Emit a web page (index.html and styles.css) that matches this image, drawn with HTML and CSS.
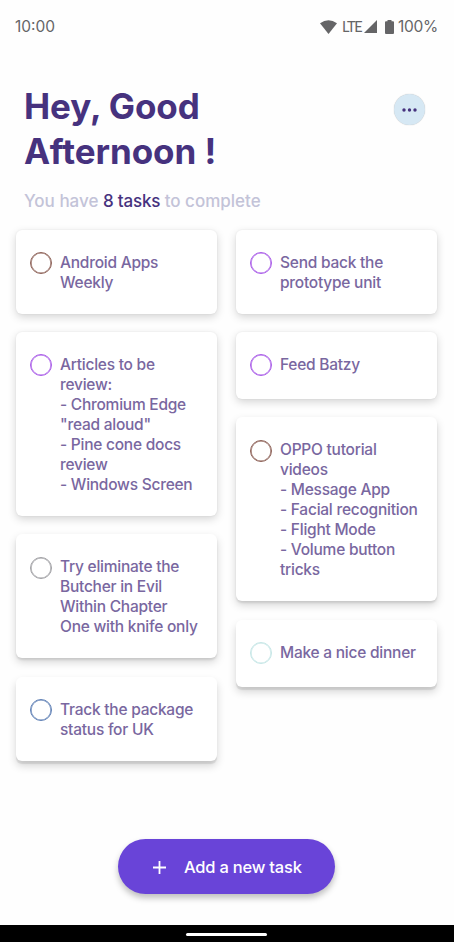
FILE: index.html
```
<!DOCTYPE html>
<html lang="en">
<head>
    <meta charset="utf-8">
    <title>Tasks</title>
    <link rel="stylesheet" href="styles.css">
</head>
<body>
    <div id="status-bar">
        <span class="time">10:00</span>
        <div class="status-icons">
            <svg class="wifi" width="17" height="14" viewBox="0 0 17 14"><path d="M0 3.3Q8.5-2.8 17 3.3L8.5 14z"/></svg>
            <span class="lte">LTE</span>
            <svg class="signal" width="13" height="13" viewBox="0 0 13 13"><path d="M13 0v13H0z"/></svg>
            <svg class="battery" width="9" height="14" viewBox="0 0 9 14"><path d="M2.5 0h4v1.2H8q1 0 1 1V13q0 1-1 1H1q-1 0-1-1V2.2q0-1 1-1h1.5z"/></svg>
            <span class="percent">100%</span>
        </div>
    </div>

    <header>
        <div>
            <h1>Hey, Good<br>Afternoon !</h1>
            <p class="summary">You have <b>8 tasks</b> to complete</p>
        </div>
        <button class="more" aria-label="More">
            <svg width="15" height="4" viewBox="0 0 15 4"><circle cx="2" cy="2" r="1.7"/><circle cx="7.5" cy="2" r="1.7"/><circle cx="13" cy="2" r="1.7"/></svg>
        </button>
    </header>

    <main>
        <div class="column">
            <div class="card">
                <span class="check brown"></span>
                <div class="text">Android Apps<br>Weekly</div>
            </div>
            <div class="card">
                <span class="check purple"></span>
                <div class="text">Articles to be<br>review:<br>- Chromium Edge<br>"read aloud"<br>- Pine cone docs<br>review<br>- Windows Screen</div>
            </div>
            <div class="card low">
                <span class="check grey"></span>
                <div class="text">Try eliminate the<br>Butcher in Evil<br>Within Chapter<br>One with knife only</div>
            </div>
            <div class="card lowest">
                <span class="check blue"></span>
                <div class="text">Track the package<br>status for UK</div>
            </div>
        </div>
        <div class="column">
            <div class="card">
                <span class="check purple"></span>
                <div class="text">Send back the<br>prototype unit</div>
            </div>
            <div class="card">
                <span class="check purple"></span>
                <div class="text">Feed Batzy</div>
            </div>
            <div class="card low">
                <span class="check brown"></span>
                <div class="text">OPPO tutorial<br>videos<br>- Message App<br>- Facial recognition<br>- Flight Mode<br>- Volume button<br>tricks</div>
            </div>
            <div class="card lowest">
                <span class="check mint"></span>
                <div class="text">Make a nice dinner</div>
            </div>
        </div>
    </main>

    <footer>
        <button class="add">
            <svg width="13" height="13" viewBox="0 0 13 13"><path d="M6.5 0v13M0 6.5h13"/></svg>
            <span>Add a new task</span>
        </button>
        <div id="nav-bar"><div class="handle"></div></div>
    </footer>
</body>
</html>
```

FILE: styles.css
```
* {
    box-sizing: border-box;
}

body {
    margin: 0;
    height: 942px;
    display: flex;
    flex-direction: column;
    background: #fefefe;
    font-family: Inter, "Liberation Sans", sans-serif;
    overflow: hidden;
}

button {
    border: none;
    padding: 0;
    font-family: inherit;
    cursor: pointer;
}

#status-bar {
    display: flex;
    justify-content: space-between;
    height: 54px;
    padding: 0 16px 0 15px;
    align-items: center;
    color: #656567;
    font-size: 15.5px;
    line-height: 20px;
}

.status-icons {
    display: flex;
    align-items: center;
}

.status-icons svg {
    fill: #656567;
    margin-top: -1px;
}

.lte {
    width: 19px;
    margin-left: 5px;
    font-family: Lato, sans-serif;
    font-size: 14.5px;
    letter-spacing: -1.2px;
}

.status-icons .signal {
    margin-left: 3px;
}

.status-icons .battery {
    margin: -1px 4px 0 8px;
}

.percent {
    letter-spacing: -0.3px;
}

header {
    display: flex;
    justify-content: space-between;
    height: 175.5px;
    padding: 30px 29px 0 24px;
}

h1 {
    margin: 0;
    color: #46327e;
    font-size: 35px;
    font-weight: 700;
    line-height: 44.5px;
    letter-spacing: -0.05px;
}

.summary {
    margin: 17px 0 0;
    color: #c3c3d8;
    font-size: 17px;
    font-weight: 500;
    line-height: 22px;
}

.summary b {
    color: #46327e;
    font-weight: 500;
    letter-spacing: -0.2px;
}

.more {
    display: flex;
    align-items: center;
    justify-content: center;
    width: 31px;
    height: 31px;
    margin-top: 10px;
    border-radius: 50%;
    background: #d6e8f4;
    box-shadow: 0 0 1px rgba(0, 0, 0, 0.3);
}

.more svg {
    fill: #46327e;
}

main {
    display: grid;
    grid-template-columns: 201px 201px;
    gap: 19px;
    padding: 0 16px;
    flex: 1;
}

.column {
    display: flex;
    flex-direction: column;
    gap: 18.4px;
}

.card {
    display: flex;
    align-items: flex-start;
    min-height: 67px;
    padding: 22px 0 22px 14px;
    border-radius: 6px;
    background: #fff;
    box-shadow: 0 3px 8px rgba(0, 0, 0, 0.17), 0 0 2px rgba(0, 0, 0, 0.07);
}

.low {
    box-shadow: 0 4px 8px rgba(0, 0, 0, 0.17), 0 2px 2px rgba(0, 0, 0, 0.09);
}

.lowest {
    box-shadow: 0 5px 9px rgba(0, 0, 0, 0.16), 0 3px 1px rgba(0, 0, 0, 0.09);
}

.check {
    width: 22px;
    height: 22px;
    margin: 0.6px 8px 0 0;
    border: 1px solid;
    border-radius: 50%;
    box-shadow: inset 0 0 0 0.6px currentColor;
}

.brown { color: #8d6157; }
.purple { color: #a95be8; }
.grey { color: #a0a0a4; }
.blue { color: #5e7fb5; }
.mint { color: #c5e6e6; }

.text {
    position: relative;
    top: 1px;
    color: #7967a0;
    font-size: 15.5px;
    font-weight: 500;
    line-height: 20px;
    letter-spacing: -0.24px;
    white-space: nowrap;
}

footer {
    display: flex;
    flex-direction: column;
    align-items: center;
}

.add {
    display: flex;
    align-items: center;
    width: 217px;
    height: 55px;
    margin: 0 1px 31px 0;
    padding-left: 35px;
    border-radius: 28px;
    background: #6944d8;
    color: #fff;
    font-size: 16.5px;
    font-weight: 500;
    letter-spacing: -0.22px;
    box-shadow: 0 4px 6px rgba(0, 0, 0, 0.25);
}

.add svg {
    margin: 1px 18px 0 0;
    stroke: #fff;
    stroke-width: 1.8;
}

#nav-bar {
    display: flex;
    justify-content: center;
    width: 100%;
    height: 17px;
    padding: 8px 1px 0 0;
    background: #000;
}

.handle {
    width: 81px;
    height: 3px;
    border-radius: 2px;
    background: #fff;
}
```
